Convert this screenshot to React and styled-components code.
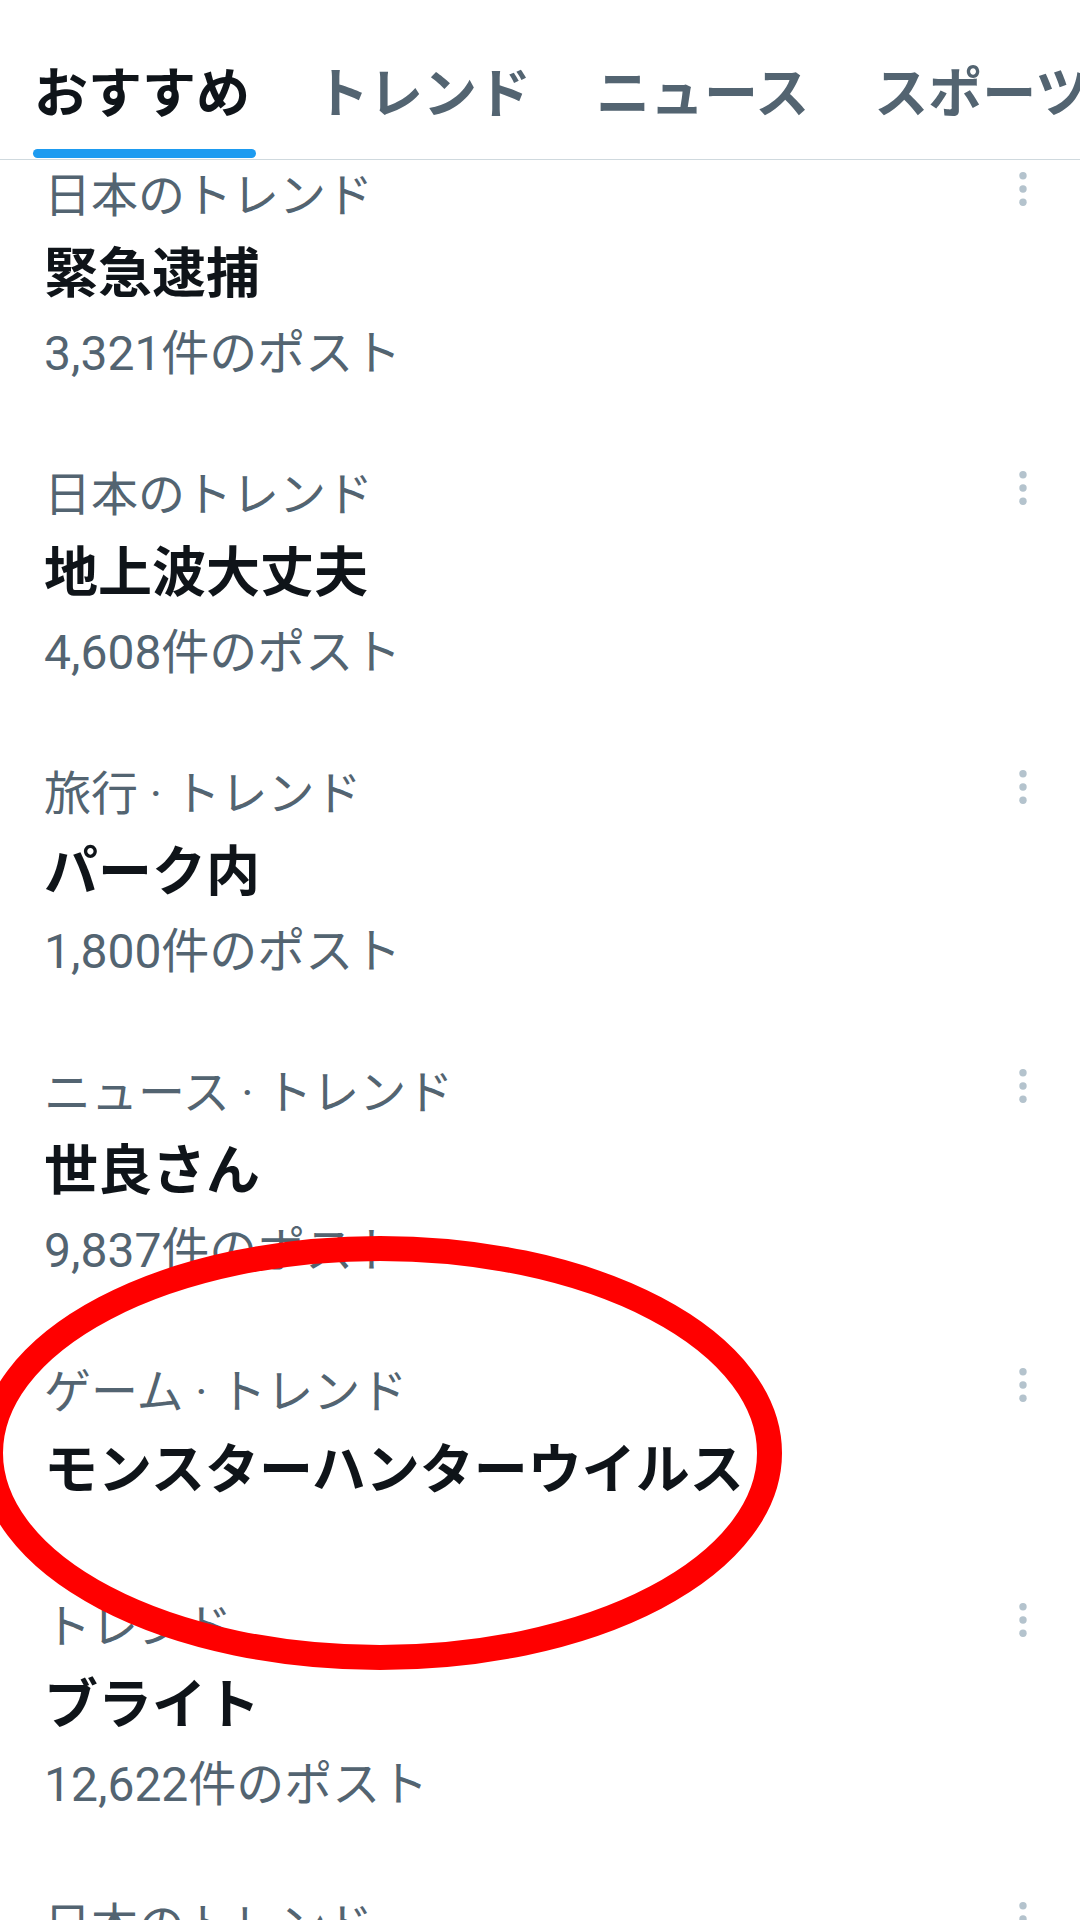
import { createGlobalStyle, styled } from "styled-components";

const GlobalStyle = createGlobalStyle`
  html, body {
    margin: 0;
    padding: 0;
    background: #ffffff;
  }
  body {
    font-family: Roboto, "Noto Sans CJK JP", sans-serif;
    overflow: hidden;
  }
`;

const Page = styled.div`
  position: relative;
  width: 1080px;
  height: 1920px;
  overflow: hidden;
  background: #ffffff;
`;

const TabBar = styled.nav`
  display: flex;
  gap: 65px;
  height: 160px;
  box-sizing: border-box;
  padding-left: 34px;
  border-bottom: 1px solid #cfd9de;
  overflow: hidden;
  white-space: nowrap;
`;

const Tab = styled.div`
  display: flex;
  flex-direction: column;
  justify-content: flex-end;
  flex-shrink: 0;
`;

const TabLabel = styled.span`
  font-size: 54px;
  font-weight: 700;
  line-height: 60px;
  margin-bottom: 24px;
  color: ${(p) => (p.$active ? "#0f1419" : "#536471")};
`;

const Indicator = styled.div`
  height: 9px;
  margin: 0 -6px 1px -1px;
  border-radius: 5px;
  background: ${(p) => (p.$active ? "#1d9bf0" : "transparent")};
`;

const Feed = styled.div`
  overflow: hidden;
`;

// the list is scrolled a little under the tab bar
const FeedInner = styled.div`
  margin-top: -34px;
`;

const Row = styled.div`
  display: flex;
  justify-content: space-between;
  align-items: flex-start;
  padding: 40px 47px 41px 44px;
`;

const Body = styled.div`
  display: flex;
  flex-direction: column;
`;

const Category = styled.div`
  font-size: 47px;
  line-height: 60px;
  color: #536471;
  white-space: nowrap;
`;

const Title = styled.div`
  font-size: 54px;
  font-weight: 700;
  line-height: 72px;
  margin-top: 13px;
  margin-bottom: 9px;
  color: #0f1419;
  white-space: nowrap;
`;

const Count = styled.div`
  font-size: 48px;
  line-height: 60px;
  margin-top: 4px;
  color: #536471;
  white-space: nowrap;
`;

const MoreButton = styled.div`
  flex-shrink: 0;
  margin-top: 3px;
  width: 20px;
  height: 40px;
`;

const Annotation = styled.svg`
  position: absolute;
  left: 0;
  top: 0;
  pointer-events: none;
`;

const tabs = ["おすすめ", "トレンド", "ニュース", "スポーツ"];

const trends = [
  { category: "日本のトレンド", title: "緊急逮捕", count: "3,321件のポスト" },
  { category: "日本のトレンド", title: "地上波大丈夫", count: "4,608件のポスト" },
  { category: "旅行 · トレンド", title: "パーク内", count: "1,800件のポスト" },
  { category: "ニュース · トレンド", title: "世良さん", count: "9,837件のポスト" },
  { category: "ゲーム · トレンド", title: "モンスターハンターウイルス" },
  { category: "トレンド", title: "ブライト", count: "12,622件のポスト" },
  { category: "日本のトレンド", title: "新番組", count: "2,045件のポスト" },
];

function MoreIcon() {
  return (
    <MoreButton>
      <svg width="20" height="40" viewBox="0 0 20 40">
        <circle cx="10" cy="6.7" r="3.7" fill="#b4c3cd" />
        <circle cx="10" cy="20" r="3.7" fill="#b4c3cd" />
        <circle cx="10" cy="33.3" r="3.7" fill="#b4c3cd" />
      </svg>
    </MoreButton>
  );
}

export default function App() {
  return (
    <Page>
      <GlobalStyle />
      <TabBar>
        {tabs.map((t, i) => (
          <Tab key={t}>
            <TabLabel $active={i === 0}>{t}</TabLabel>
            <Indicator $active={i === 0} />
          </Tab>
        ))}
      </TabBar>
      <Feed>
        <FeedInner>
          {trends.map((item, i) => (
            <Row key={i}>
              <Body>
                <Category>{item.category}</Category>
                <Title>{item.title}</Title>
                {item.count && <Count>{item.count}</Count>}
              </Body>
              <MoreIcon />
            </Row>
          ))}
        </FeedInner>
      </Feed>
      <Annotation width="1080" height="1920" viewBox="0 0 1080 1920">
        <ellipse
          cx="380"
          cy="1453"
          rx="389.5"
          ry="204.5"
          fill="none"
          stroke="#ff0000"
          strokeWidth="25"
        />
      </Annotation>
    </Page>
  );
}
